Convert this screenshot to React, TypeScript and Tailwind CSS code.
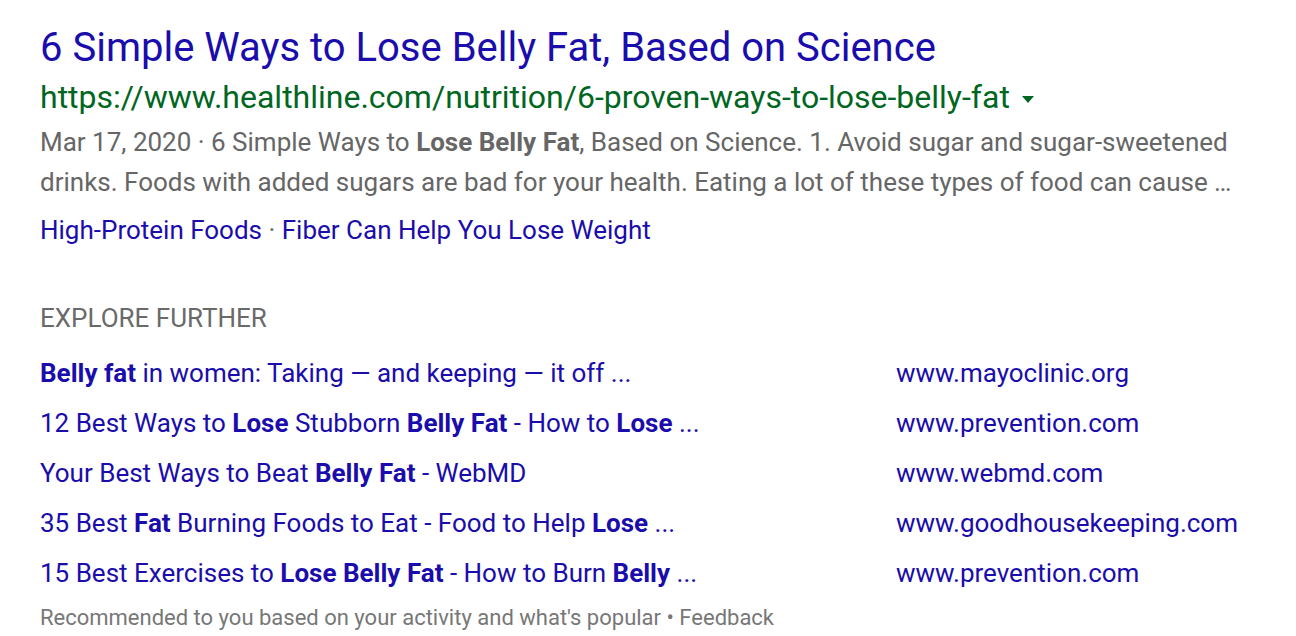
const rows = [
  {
    parts: [
      { t: "Belly fat", b: true },
      { t: " in women: Taking — and keeping — it off ..." },
    ],
    site: "www.mayoclinic.org",
  },
  {
    parts: [
      { t: "12 Best Ways to " },
      { t: "Lose", b: true },
      { t: " Stubborn " },
      { t: "Belly Fat", b: true },
      { t: " - How to " },
      { t: "Lose", b: true },
      { t: " ..." },
    ],
    site: "www.prevention.com",
  },
  {
    parts: [
      { t: "Your Best Ways to Beat " },
      { t: "Belly Fat", b: true },
      { t: " - WebMD" },
    ],
    site: "www.webmd.com",
  },
  {
    parts: [
      { t: "35 Best " },
      { t: "Fat", b: true },
      { t: " Burning Foods to Eat - Food to Help " },
      { t: "Lose", b: true },
      { t: " ..." },
    ],
    site: "www.goodhousekeeping.com",
  },
  {
    parts: [
      { t: "15 Best Exercises to " },
      { t: "Lose Belly Fat", b: true },
      { t: " - How to Burn " },
      { t: "Belly", b: true },
      { t: " ..." },
    ],
    site: "www.prevention.com",
  },
];

const App = () => {
  return (
    <main className="min-h-screen bg-white pl-10 pt-[22px] font-['Roboto',sans-serif]">
      <div className="w-[1200px]">
        <a className="block text-[40px] leading-[52px] text-[#1a0dab]">
          6 Simple Ways to Lose Belly Fat, Based on Science
        </a>
        <div className="flex items-center text-[32px] leading-[46px] text-[#006621]">
          <span>https://www.healthline.com/nutrition/6-proven-ways-to-lose-belly-fat</span>
          <span className="ml-3 mt-1 h-0 w-0 border-x-[6px] border-t-[7px] border-x-transparent border-t-[#006621]"></span>
        </div>
        <p className="mt-[2px] text-[26px] leading-[40px] text-[#666666]">
          Mar 17, 2020 · 6 Simple Ways to <b>Lose Belly Fat</b>, Based on Science. 1. Avoid sugar and
          sugar-sweetened drinks. Foods with added sugars are bad for your health. Eating a lot of these
          types of food can cause …
        </p>
        <div className="mt-2 text-[26px] leading-[40px] text-[#1a0dab]">
          <a>High-Protein Foods</a>
          <span className="text-[#666666]"> · </span>
          <a>Fiber Can Help You Lose Weight</a>
        </div>

        <div className="mt-12 text-[26px] leading-[40px] text-[#6a6a6a]">EXPLORE FURTHER</div>
        <div className="mt-[10px]">
          {rows.map((r, i) => (
            <div key={i} className="grid grid-cols-[856px_1fr] text-[26px] leading-[50px] text-[#1a0dab]">
              <a>
                {r.parts.map((p, j) =>
                  p.b ? <b key={j}>{p.t}</b> : <span key={j}>{p.t}</span>
                )}
              </a>
              <a>{r.site}</a>
            </div>
          ))}
        </div>
        <div className="text-[22px] leading-[40px] text-[#777777]">
          Recommended to you based on your activity and what's popular • Feedback
        </div>
      </div>
    </main>
  );
};

export default App;
